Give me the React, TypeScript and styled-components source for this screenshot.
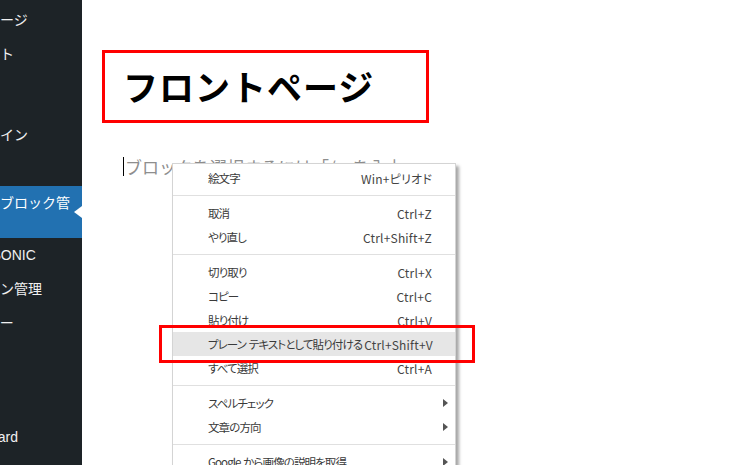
import React from 'react';
import styled, { createGlobalStyle } from 'styled-components';

const GlobalStyle = createGlobalStyle`
  body {
    margin: 0;
    overflow: hidden;
    font-family: "Liberation Sans", "Noto Sans CJK JP", sans-serif;
  }
`;

interface SideEntry {
  label: string;
  active?: boolean;
  gapBefore?: number;
}

const sideEntries: SideEntry[] = [
  { label: '固定ページ' },
  { label: 'コメント' },
  { label: '外観' },
  { label: 'プラグイン', gapBefore: 13 },
  { label: 'チーム' },
  { label: '再利用ブロック管理', active: true },
  { label: 'SEO SONIC' },
  { label: 'ログイン管理' },
  { label: 'ユーザー' },
  { label: 'ツール' },
  { label: '設定' },
  { label: 'Clipboard', gapBefore: 12 },
];

type MenuEntry =
  | { kind: 'item'; label: string; shortcut?: string; sub?: boolean; hover?: boolean }
  | { kind: 'sep' };

const menuEntries: MenuEntry[] = [
  { kind: 'item', label: '絵文字', shortcut: 'Win+ピリオド' },
  { kind: 'sep' },
  { kind: 'item', label: '取消', shortcut: 'Ctrl+Z' },
  { kind: 'item', label: 'やり直し', shortcut: 'Ctrl+Shift+Z' },
  { kind: 'sep' },
  { kind: 'item', label: '切り取り', shortcut: 'Ctrl+X' },
  { kind: 'item', label: 'コピー', shortcut: 'Ctrl+C' },
  { kind: 'item', label: '貼り付け', shortcut: 'Ctrl+V' },
  { kind: 'item', label: 'プレーン テキストとして貼り付ける', shortcut: 'Ctrl+Shift+V', hover: true },
  { kind: 'item', label: 'すべて選択', shortcut: 'Ctrl+A' },
  { kind: 'sep' },
  { kind: 'item', label: 'スペルチェック', sub: true },
  { kind: 'item', label: '文章の方向', sub: true },
  { kind: 'sep' },
  { kind: 'item', label: 'Google から画像の説明を取得', sub: true },
];

const App = () => {
  return (
    <>
      <GlobalStyle />
      <Page>
        <Sidebar>
          {sideEntries.map((e) => (
            <React.Fragment key={e.label}>
              {e.gapBefore ? <SideGap $h={e.gapBefore} /> : null}
              <SideItem $active={e.active}>
                {e.label}
                {e.active && <CurrentArrow />}
              </SideItem>
            </React.Fragment>
          ))}
        </Sidebar>
        <Main>
          <TitleBox>
            <Title>フロントページ</Title>
          </TitleBox>
          <Placeholder>ブロックを選択するには「/」を入力</Placeholder>
        </Main>

        <ContextMenu>
          {menuEntries.map((e, i) =>
            e.kind === 'sep' ? (
              <Separator key={i} />
            ) : (
              <MenuRow key={i} $hover={e.hover}>
                <MenuLabel>{e.label}</MenuLabel>
                {e.shortcut && <Shortcut>{e.shortcut}</Shortcut>}
                <SubCell>{e.sub && <SubArrow />}</SubCell>
              </MenuRow>
            )
          )}
        </ContextMenu>

        <Highlight />
      </Page>
    </>
  );
};

const Page = styled.div`
  position: relative;
  display: flex;
  width: 740px;
  height: 465px;
  overflow: hidden;
  background-color: #fff;
`;

const Sidebar = styled.nav`
  width: 82px;
  flex-shrink: 0;
  display: flex;
  flex-direction: column;
  padding-top: 3px;
  background-color: #1d2327;
  overflow: hidden;
`;

const SideGap = styled.div<{ $h: number }>`
  height: ${(props) => props.$h}px;
  flex-shrink: 0;
`;

const SideItem = styled.div<{ $active?: boolean }>`
  position: relative;
  flex-shrink: 0;
  margin-left: -42px;
  padding: 8px 10px 8px 0;
  font-size: 14px;
  line-height: 18px;
  color: ${(props) => (props.$active ? '#fff' : '#f0f0f1')};
  background-color: ${(props) => (props.$active ? '#2271b1' : 'transparent')};
`;

const CurrentArrow = styled.span`
  position: absolute;
  right: 0;
  top: 50%;
  margin-top: -6px;
  width: 0;
  height: 0;
  border-top: 6px solid transparent;
  border-bottom: 6px solid transparent;
  border-right: 8px solid #fff;
`;

const Main = styled.main`
  flex: 1;
  padding: 50px 0 0 20px;
`;

const TitleBox = styled.div`
  box-sizing: border-box;
  width: 327px;
  height: 73px;
  display: flex;
  align-items: center;
  padding-left: 18px;
  border: 3px solid #ff0000;
`;

const Title = styled.h1`
  margin: 0 0 3px;
  font-family: "Noto Sans CJK JP", sans-serif;
  font-size: 35px;
  font-weight: 700;
  line-height: 1;
  letter-spacing: 1px;
  color: #000;
`;

const Placeholder = styled.div`
  margin: 34px 0 0 21px;
  height: 19px;
  padding-left: 1px;
  border-left: 1px solid #000;
  font-family: "Noto Sans CJK JP", sans-serif;
  font-size: 17px;
  line-height: 19px;
  color: #8e8e8e;
  white-space: nowrap;
`;

const ContextMenu = styled.div`
  position: absolute;
  left: 172px;
  top: 163px;
  box-sizing: border-box;
  width: 284px;
  padding-top: 2px;
  background-color: #fff;
  border: 1px solid #d4d4d4;
  box-shadow: 3px 3px 3px rgba(0, 0, 0, 0.35);
  font-family: "Noto Sans CJK JP", sans-serif;
  font-size: 12px;
  font-feature-settings: "palt";
  color: #3a3a3a;
`;

const MenuRow = styled.div<{ $hover?: boolean }>`
  display: flex;
  align-items: center;
  height: 24px;
  padding-left: 35px;
  background-color: ${(props) => (props.$hover ? '#e6e6e6' : 'transparent')};
  white-space: nowrap;
`;

const MenuLabel = styled.span`
  flex: 1;
  padding-right: 2px;
  font-size: 11.5px;
  letter-spacing: -0.9px;
  word-spacing: 1px;
`;

const Shortcut = styled.span`
  color: #444;
  letter-spacing: 0.2px;
`;

const SubCell = styled.span`
  width: 23px;
  flex-shrink: 0;
  display: flex;
  align-items: center;
  padding-left: 11px;
  box-sizing: border-box;
`;

const SubArrow = styled.span`
  width: 0;
  height: 0;
  border-top: 4px solid transparent;
  border-bottom: 4px solid transparent;
  border-left: 5px solid #555;
`;

const Separator = styled.div`
  height: 1px;
  margin: 5px 0;
  background-color: #e0e0e0;
`;

const Highlight = styled.div`
  position: absolute;
  left: 159px;
  top: 325px;
  box-sizing: border-box;
  width: 316px;
  height: 38px;
  border: 3px solid #ff0000;
  pointer-events: none;
`;

export default App;
